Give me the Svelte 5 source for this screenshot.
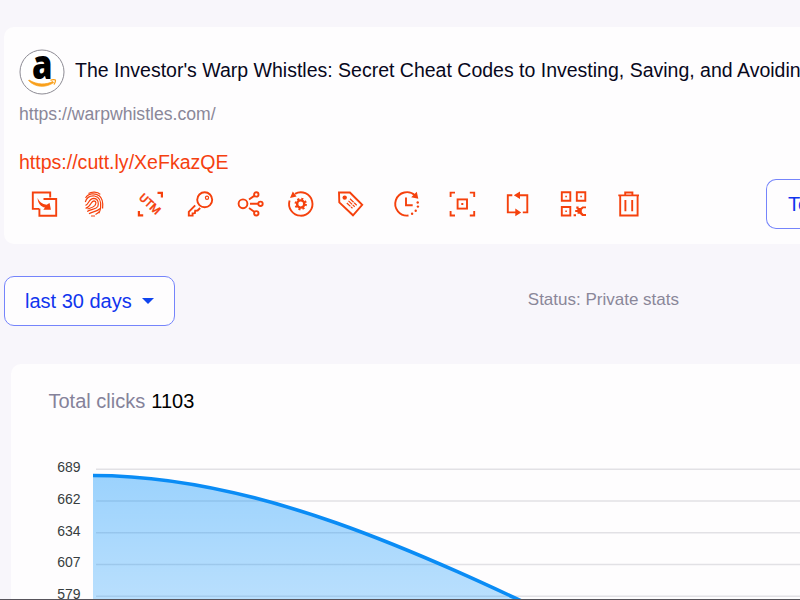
<script lang="ts">
	const ticks = [689, 662, 634, 607, 579];
	const tickTop = 105;
	const tickStep = 31.75;

	const line = 'M82 111.5C409 111.5 725 415.5 1052 415.5';
	const area = `${line}V500H82Z`;
</script>

<div class="page">
	<section class="card link-card">
		<header class="link-header">
			<svg class="logo" viewBox="0 0 46 46" aria-label="amazon">
				<circle cx="23" cy="23" r="22" fill="#fff" stroke="#8d8b94" stroke-width="1" />
				<text class="logo-letter" x="13" y="30" textLength="20.5" lengthAdjust="spacingAndGlyphs">a</text>
				<path d="M10 31C18 36 27 36 33.800 32.500L34.600 33.600C27 39 16 38.600 9.600 31.500Z" fill="#f9a01b" stroke="#f9a01b" stroke-width=".8" />
				<path d="M31.500 31.400C33 30.600 35.800 30.400 36.300 31S36 34.500 34.800 35.500" fill="none" stroke="#f9a01b" stroke-width="1.300" />
			</svg>
			<h1 class="title">The Investor's Warp Whistles: Secret Cheat Codes to Investing, Saving, and Avoiding</h1>
		</header>
		<div class="source-url">https://warpwhistles.com/</div>
		<a class="short-url" href="https://cutt.ly/XeFkazQE">https://cutt.ly/XeFkazQE</a>

		<div class="toolbar">
			<div class="icons">
				<!-- copy -->
				<svg viewBox="0 0 26 26">
					<path d="M8 17.900H1.800V1.500H19.200V6.500" />
					<path d="M12.500 8H25.200V24.800H8.400V17.500" />
					<path class="solid" d="M6.600 7C8 10.500 11 13.200 15.600 13.800L18.600 12 19.900 18.800 12.300 18.800 14 16.600C10 15.800 6.800 12.500 6.600 7Z" />
				</svg>
				<!-- fingerprint -->
				<svg viewBox="0 0 26 26">
					<g class="fine">
						<path d="M7.500 2.600C10.500 .4 16.500 .5 19.300 3.300" />
						<path d="M4.600 7C7 2.200 14 1.700 18.200 4.700 21.700 7.300 22.200 12 21.600 17.500" />
						<path d="M4.300 11C5.500 7 9 4.600 13.500 5 19.500 6 20.200 12 19.600 17 19.300 19 18.600 20.800 17.800 22.300" />
						<path d="M4.500 14.300C8 13.500 7.500 7.500 12.800 7.400 17.500 7.500 17.800 12.500 16.800 15.500 15 18.500 10 18 6.200 20.600" />
						<path d="M4.600 17.300C10.500 15.700 9.500 10 13 9.800 15.800 10.200 15 13 13.800 14.600 12 16.600 9.500 17 6.500 18" />
						<path d="M8 22.800C11 20.500 15.500 21.200 19.300 17.500M14.500 23.500C15.800 22.800 17.200 21.800 18.300 20.800M10 25H14" />
					</g>
				</svg>
				<!-- utm -->
				<svg class="wide" viewBox="0 0 26 26">
					<path class="solid" d="M20.500 .8H26V6.500H23.800V3H20.500ZM.8 20H3V23.300H6.200V25.500H.8Z" />
					<text class="utm" x="0" y="3.800" transform="translate(12.800 13.200) rotate(43)">UTM</text>
				</svg>
				<!-- key -->
				<svg viewBox="0 0 26 26">
					<circle cx="17.700" cy="8.800" r="7.500" />
					<circle class="fine" cx="20" cy="6.700" r="1.600" />
					<path d="M8.200 14.300 1.800 20.800V24.600H5.600V22.400L7.900 22.200 8.200 19.700 10.600 19.500 13.200 17" />
				</svg>
				<!-- share -->
				<svg viewBox="0 0 26 26">
					<circle cx="6" cy="12.800" r="4.400" />
					<circle cx="19.300" cy="3.400" r="2.200" />
					<circle cx="23.500" cy="12.800" r="2.200" />
					<circle cx="19.300" cy="22.300" r="2.200" />
					<path d="M12 8.500 17.200 4.900M13 12.800H21.300M12 17.100 17.200 20.800" />
				</svg>
				<!-- auto settings -->
				<svg viewBox="0 0 26 26">
					<path d="M2.600 9.500A11.700 11.700 0 1 0 8 2.800" />
					<path class="solid" d="M5.800 .6 9.600 5.400 3 6.900Z" />
					<circle class="hub" cx="13.700" cy="13" r="3.600" />
					<circle class="teeth" cx="13.700" cy="13" r="5.200" />
				</svg>
				<!-- tag -->
				<svg viewBox="0 0 26 26">
					<path d="M2 1.500H12.900L25.200 13.900 16 24.300 2.300 11.400Z" />
					<circle class="solid" cx="7.700" cy="6.600" r="2.200" />
					<path class="fine" d="M13 7.800 19.700 14.200M11.500 9.900 17.700 15.800M9.800 12 15.500 17.300" stroke-dasharray="5 .8" />
				</svg>
				<!-- expiration -->
				<svg class="wide" viewBox="0 0 26 26">
					<path d="M15.500 24.500A11.700 11.700 0 1 1 22.200 4.600" />
					<path class="solid" d="M23.800 .8 25.300 7.700 18.200 6.300Z" />
					<path d="M13 6.500V14.300H19.700" />
					<g class="solid">
						<circle cx="24.700" cy="11.500" r="1.200" />
						<circle cx="24.900" cy="15.600" r="1.200" />
						<circle cx="22.700" cy="19.700" r="1.200" />
						<circle cx="19.100" cy="22.800" r="1.200" />
					</g>
				</svg>
				<!-- pixel -->
				<svg class="wide" viewBox="0 0 26 26">
					<path d="M6 1.600H1.600V6M20.800 1.600H25.200V6M6 24.500H1.600V20M20.800 24.500H25.200V20" />
					<rect x="8.600" y="8.400" width="9.400" height="9.200" />
					<rect class="solid" x="12.300" y="12" width="2" height="2" />
				</svg>
				<!-- redirect -->
				<svg class="wide" viewBox="0 0 26 26">
					<path d="M7.300 4.300H2.800V21.400H11M14 4.300H22.300V21.400H17.800" />
					<path class="solid" d="M8.800 4.300 15 .5V8.100ZM16.200 21.400 10.300 17.600V25.200Z" />
				</svg>
				<!-- qr code -->
				<svg class="wide" viewBox="0 0 26 26">
					<path d="M.8 1.300H9.300V9.700H.8ZM15.800 1.300H24.300V9.700H15.800ZM.8 16H9.300V24.500H.8Z" />
					<path class="solid" d="M4.300 4.700H5.900V6.300H4.300ZM19.300 4.700H20.900V6.300H19.300ZM4.300 19.500H5.900V21.100H4.300Z" />
					<path class="solid" d="M15.300 15.400H17.600V17.100H19.500L21.500 15.400H25V17.200H22.400L20.800 18.800V21.200L22.400 23.100H25V25H21.100L18.800 22.800H16.500V21H14.200V19H16.300V17.700H15.300ZM12.600 23.200H15V25.200H12.600Z" />
				</svg>
				<!-- delete -->
				<svg class="wide" viewBox="0 0 26 26">
					<path d="M1.300 4.400H22M8.200 4V1.500H15.400V4M3.200 4.400V24.500H20.600V4.400M8.400 9V20.300M15.200 9V20.300" />
				</svg>
			</div>
			<button class="btn details">To</button>
		</div>
	</section>

	<div class="filters">
		<button class="btn period">
			last 30 days
			<span class="caret"></span>
		</button>
		<span class="status">Status: Private stats</span>
	</div>

	<section class="card chart-card">
		<div class="total">Total clicks <b>1103</b></div>
		<svg class="chart" viewBox="0 0 789 236">
			<defs>
				<linearGradient id="fill" x1="0" y1="111" x2="0" y2="415" gradientUnits="userSpaceOnUse">
					<stop offset="0" stop-color="#008ffb" stop-opacity=".39" />
					<stop offset="1" stop-color="#008ffb" stop-opacity=".1" />
				</linearGradient>
			</defs>
			{#each ticks as tick, i}
				<path class="grid" d="M85 {tickTop + 0.3 + i * tickStep}H789" />
				<text class="tick" x="69.5" y={tickTop + 3 + i * tickStep}>{tick}</text>
			{/each}
			<path d={area} fill="url(#fill)" />
			<path class="line" d={line} />
		</svg>
	</section>
</div>

<style>
	:global(body) {
		margin: 0;
		overflow: hidden;
		background: #f8f6fb;
	}

	.page {
		box-sizing: border-box;
		width: 800px;
		height: 600px;
		overflow: hidden;
		padding: 27px 0 0 4px;
		border-bottom: 1px solid #57545b;
		background: #f8f6fb;
		font-family: 'Liberation Sans', Arial, sans-serif;
		font-size: 20px;
	}

	.card {
		box-sizing: border-box;
		background: #fefdfe;
	}

	.link-card {
		height: 217px;
		padding: 22px 0 0 15px;
		border-radius: 10px 0 0 10px;
		overflow: hidden;
	}

	.link-header {
		display: flex;
		align-items: center;
		gap: 10px;
		height: 46px;
	}

	.logo {
		flex: none;
		width: 46px;
		height: 46px;
		overflow: visible;
	}

	.logo-letter {
		font: 800 40px 'Open Sans', sans-serif;
		fill: #000;
	}

	.title {
		margin: -4px 0 0;
		font-size: 19.500px;
		font-weight: 400;
		line-height: 24px;
		white-space: nowrap;
		color: #08081c;
	}

	.source-url {
		margin-top: 8px;
		font-size: 17.600px;
		line-height: 22px;
		color: #8a8799;
	}

	.short-url {
		display: block;
		margin-top: 25px;
		font-size: 19.550px;
		line-height: 24px;
		color: #f5400f;
		text-decoration: none;
	}

	.toolbar {
		display: flex;
		justify-content: space-between;
		align-items: center;
		height: 50px;
		margin-top: 5px;
		padding-left: 12px;
	}

	.icons {
		display: flex;
		gap: 24px;
	}

	.icons svg {
		width: 26px;
		height: 26px;
		overflow: visible;
		fill: none;
		stroke: #f5410d;
		stroke-width: 1.900;
	}

	.icons .wide {
		margin-left: 6px;
	}

	.icons .fine {
		stroke-width: 1.200;
	}

	.icons .solid {
		fill: #f5410d;
		stroke: none;
	}

	.icons .hub {
		stroke-width: 2.400;
	}

	.icons .teeth {
		stroke-width: 2;
		stroke-dasharray: 2.040 2.040;
	}

	.utm {
		font-family: Roboto, sans-serif;
		font-size: 11.500px;
		font-weight: 500;
		text-anchor: middle;
		text-rendering: geometricPrecision;
		fill: #f5410d;
		stroke-width: 0.300;
	}

	.btn {
		box-sizing: border-box;
		height: 50px;
		border: 1px solid #7584fb;
		border-radius: 10px;
		background: #fefdfe;
		color: #1035ee;
		font: inherit;
	}

	.details {
		width: 34px;
		padding: 0 0 0 21px;
		border-right: 0;
		border-radius: 10px 0 0 10px;
		text-align: left;
		overflow: hidden;
	}

	.filters {
		display: flex;
		align-items: center;
		justify-content: space-between;
		margin-top: 32px;
		padding-right: 121px;
	}

	.period {
		display: flex;
		align-items: center;
		gap: 10px;
		width: 171px;
		padding: 0 0 0 20px;
	}

	.caret {
		border: 6px solid transparent;
		border-top-color: #1045ee;
		border-bottom: 0;
	}

	.status {
		margin-top: -2px;
		font-size: 17px;
		color: #8a8799;
	}

	.chart-card {
		height: 236px;
		margin: 38px 0 0 7px;
		border-radius: 10px 0 0;
		display: grid;
	}

	.total,
	.chart {
		grid-area: 1 / 1;
	}

	.total {
		padding: 25px 0 0 37.500px;
		line-height: 24px;
		color: #85829a;
	}

	.total b {
		margin-left: 0.500px;
		font-weight: 400;
		color: #000;
	}

	.chart {
		width: 789px;
		height: 236px;
	}

	.grid {
		stroke: #e2e1e5;
		stroke-width: 1.500;
	}

	.tick {
		font-size: 14px;
		text-anchor: end;
		fill: #373d3f;
	}

	.line {
		fill: none;
		stroke: #0a8cf5;
		stroke-width: 3.600;
	}
</style>
